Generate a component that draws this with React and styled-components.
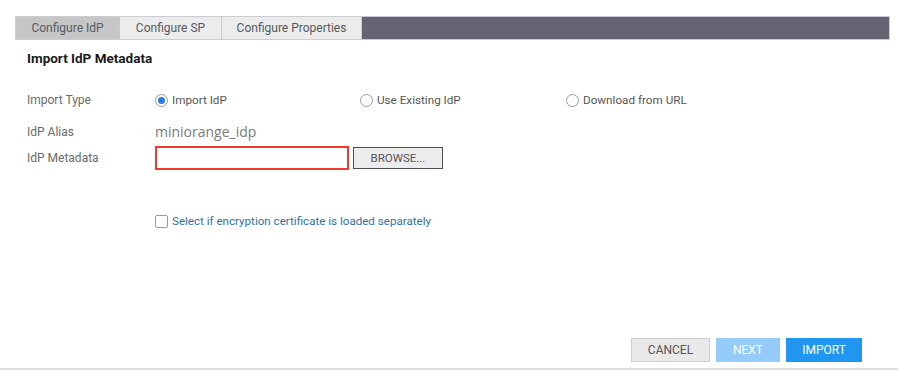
import React from "react";
import styled, { createGlobalStyle } from "styled-components";

const Global = createGlobalStyle`
  html, body { margin: 0; padding: 0; background: #fff; }
  body { font-family: Roboto, "Liberation Sans", Arial, sans-serif; width: 898px; height: 370px; overflow: hidden; }
  * { box-sizing: border-box; }
`;

const Page = styled.div`
  width: 898px;
  height: 370px;
  display: flex;
  flex-direction: column;
  padding-top: 16px;
`;

const TabBar = styled.div`
  display: flex;
  height: 24px;
  margin: 0 8px 0 15px;
  border: 1px solid #c9ccd2;
`;

const Tab = styled.div`
  width: ${(p) => p.$w}px;
  display: flex;
  align-items: center;
  justify-content: center;
  font-size: 12px;
  color: #555a63;
  background: ${(p) => (p.$active ? "#c6c6c6" : "#ececec")};
  border-right: 1px solid #c3ccd6;
`;

const Filler = styled.div`
  flex: 1;
  background: #656472;
`;

const Heading = styled.div`
  margin: 10px 0 0 27px;
  font-size: 13.5px;
  font-weight: 700;
  color: #1a1a1a;
  line-height: 16px;
`;

const Form = styled.div`
  margin: 26px 0 0 27px;
  display: grid;
  grid-template-columns: 128px auto;
`;

const Label = styled.div`
  font-size: 12px;
  color: #6a6a6a;
  height: ${(p) => p.$h}px;
  padding-top: ${(p) => p.$pt || 0}px;
  display: flex;
  align-items: center;
`;

const Cell = styled.div`
  height: ${(p) => p.$h}px;
  padding-top: ${(p) => p.$pt || 0}px;
  display: flex;
  align-items: center;
`;

const RadioGroup = styled.div`
  display: grid;
  grid-template-columns: 205px 206px auto;
`;

const RadioOpt = styled.label`
  display: flex;
  align-items: center;
  gap: 4px;
  font-size: 11.7px;
  color: #555;
`;

const RadioCircle = styled.span`
  width: 13px;
  height: 13px;
  border-radius: 50%;
  border: 1px solid #9a9a9a;
  display: flex;
  align-items: center;
  justify-content: center;
  background: #fff;
  &::after {
    content: "";
    width: 7px;
    height: 7px;
    border-radius: 50%;
    background: ${(p) => (p.$on ? "#2a79e0" : "transparent")};
  }
`;

const Alias = styled.span`
  font-family: "Open Sans", "Noto Sans", sans-serif;
  font-size: 14px;
  color: #7a7a7a;
`;

const FileInput = styled.div`
  width: 194px;
  height: 24px;
  border: 2px solid #ee3b2b;
  background: #fff;
`;

const Browse = styled.div`
  margin-left: 4px;
  width: 90px;
  height: 22px;
  border: 1px solid #4a4d57;
  background: #ececec;
  display: flex;
  align-items: center;
  justify-content: center;
  font-size: 11.5px;
  color: #555;
`;

const CheckRow = styled.label`
  margin: 44px 0 0 155px;
  display: flex;
  align-items: center;
  gap: 4px;
  font-size: 11.6px;
  color: #2f72ab;
  height: 14px;
`;

const Box = styled.span`
  width: 13px;
  height: 13px;
  border: 1px solid #9a9a9a;
  border-radius: 2px;
  background: #fff;
`;

const Footer = styled.div`
  margin-top: auto;
  display: flex;
  justify-content: flex-end;
  gap: 6px;
  padding: 0 36px 6px 0;
  border-bottom: 2px solid #dedede;
`;

const Btn = styled.div`
  width: ${(p) => p.$w}px;
  height: 24px;
  display: flex;
  align-items: center;
  justify-content: center;
  font-size: 12px;
  background: ${(p) => p.$bg};
  color: ${(p) => p.$fg};
  border: 1px solid ${(p) => p.$bd};
`;

export default function App() {
  return (
    <>
      <Global />
      <Page>
        <TabBar>
          <Tab $w={104} $active>Configure IdP</Tab>
          <Tab $w={102}>Configure SP</Tab>
          <Tab $w={140}>Configure Properties</Tab>
          <Filler />
        </TabBar>
        <Heading>Import IdP Metadata</Heading>
        <Form>
          <Label $h={16}>Import Type</Label>
          <Cell $h={16}>
            <RadioGroup>
              <RadioOpt><RadioCircle $on />Import IdP</RadioOpt>
              <RadioOpt><RadioCircle />Use Existing IdP</RadioOpt>
              <RadioOpt><RadioCircle />Download from URL</RadioOpt>
            </RadioGroup>
          </Cell>
          <Label $h={38} $pt={9}>IdP Alias</Label>
          <Cell $h={38} $pt={9}><Alias>miniorange_idp</Alias></Cell>
          <Label $h={24}>IdP Metadata</Label>
          <Cell $h={24}>
            <FileInput />
            <Browse>BROWSE...</Browse>
          </Cell>
        </Form>
        <CheckRow><Box />Select if encryption certificate is loaded separately</CheckRow>
        <Footer>
          <Btn $w={79} $bg="#e9e9e9" $fg="#555" $bd="#cfcfcf">CANCEL</Btn>
          <Btn $w={64} $bg="#94cbf8" $fg="#fff" $bd="#94cbf8">NEXT</Btn>
          <Btn $w={76} $bg="#2196f0" $fg="#fff" $bd="#2196f0">IMPORT</Btn>
        </Footer>
      </Page>
    </>
  );
}
